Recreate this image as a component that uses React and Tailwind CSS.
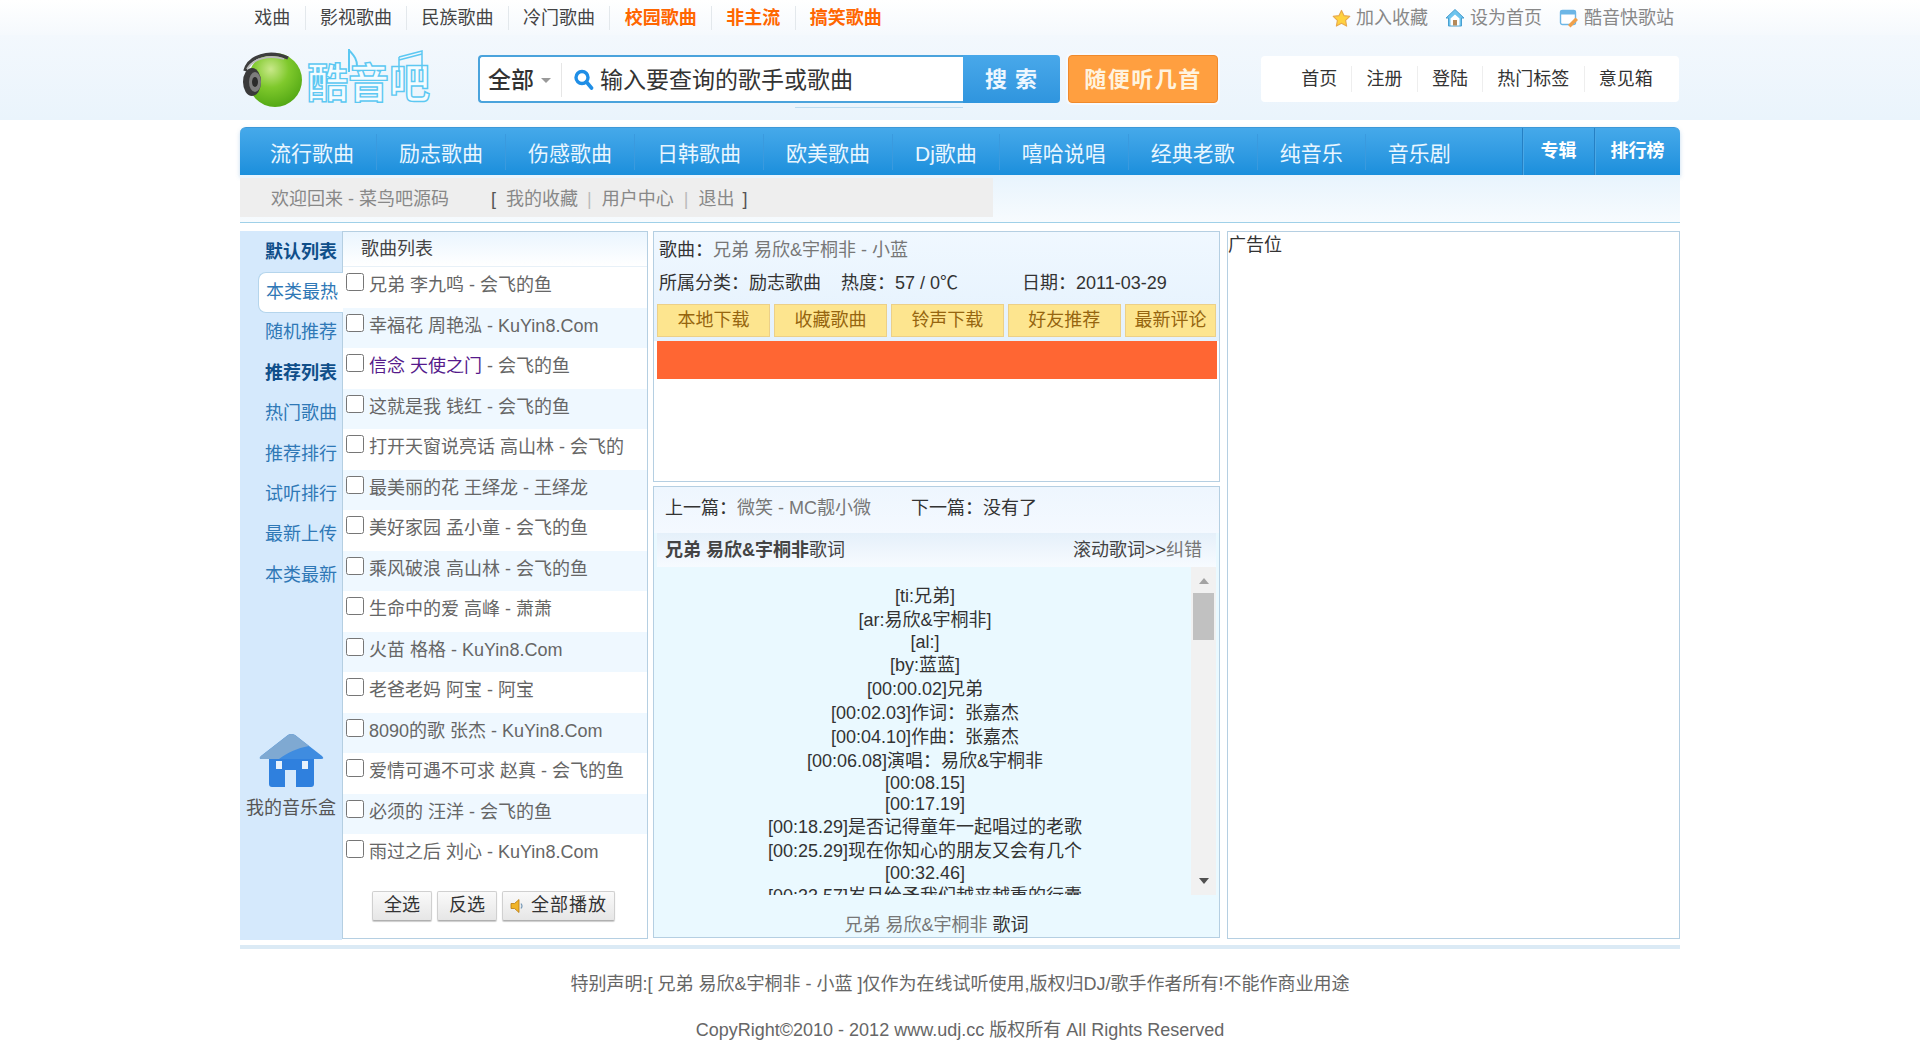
const font = "font-['Liberation_Sans','Noto_Sans_CJK_SC',sans-serif]";

const topLinks = [
  { text: "戏曲" },
  { text: "影视歌曲" },
  { text: "民族歌曲" },
  { text: "冷门歌曲" },
  { text: "校园歌曲", hot: true },
  { text: "非主流", hot: true },
  { text: "搞笑歌曲", hot: true },
];

const navItems = ["流行歌曲", "励志歌曲", "伤感歌曲", "日韩歌曲", "欧美歌曲", "Dj歌曲", "嘻哈说唱", "经典老歌", "纯音乐", "音乐剧"];

const headerLinks = ["首页", "注册", "登陆", "热门标签", "意见箱"];

const sideItems = [
  { text: "默认列表", bold: true },
  { text: "本类最热", active: true },
  { text: "随机推荐" },
  { text: "推荐列表", bold: true },
  { text: "热门歌曲" },
  { text: "推荐排行" },
  { text: "试听排行" },
  { text: "最新上传" },
  { text: "本类最新" },
];

const songs = [
  ["兄弟 李九鸣", "会飞的鱼"],
  ["幸福花 周艳泓", "KuYin8.Com"],
  ["信念 天使之门", "会飞的鱼", true],
  ["这就是我 钱红", "会飞的鱼"],
  ["打开天窗说亮话 高山林", "会飞的"],
  ["最美丽的花 王绎龙", "王绎龙"],
  ["美好家园 孟小童", "会飞的鱼"],
  ["乘风破浪 高山林", "会飞的鱼"],
  ["生命中的爱 高峰", "萧萧"],
  ["火苗 格格", "KuYin8.Com"],
  ["老爸老妈 阿宝", "阿宝"],
  ["8090的歌 张杰", "KuYin8.Com"],
  ["爱情可遇不可求 赵真", "会飞的鱼"],
  ["必须的 汪洋", "会飞的鱼"],
  ["雨过之后 刘心", "KuYin8.Com"],
];

const lyrics = [
  ["[ti:兄弟]", 1],
  ["[ar:易欣&宇桐非]", 1],
  ["[al:]", 0],
  ["[by:蓝蓝]", 1],
  ["[00:00.02]兄弟", 1],
  ["[00:02.03]作词：张嘉杰", 1],
  ["[00:04.10]作曲：张嘉杰", 1],
  ["[00:06.08]演唱：易欣&宇桐非", 1],
  ["[00:08.15]", 0],
  ["[00:17.19]", 0],
  ["[00:18.29]是否记得童年一起唱过的老歌", 1],
  ["[00:25.29]现在你知心的朋友又会有几个", 1],
  ["[00:32.46]", 0],
  ["[00:33.57]岁月给予我们越来越重的行囊", 1],
];

const actions = [
  ["本地下载", "w-[114px]"],
  ["收藏歌曲", "w-[114px]"],
  ["铃声下载", "w-[114px]"],
  ["好友推荐", "w-[114px]"],
  ["最新评论", "w-[92px]"],
];

const LogoBall = () => (
  <svg width="62" height="58" viewBox="0 0 62 58">
    <defs>
      <radialGradient id="ball" cx="0.42" cy="0.3" r="0.75">
        <stop offset="0" stopColor="#c9e88a" />
        <stop offset="0.45" stopColor="#7fc92c" />
        <stop offset="1" stopColor="#4fa512" />
      </radialGradient>
    </defs>
    <circle cx="33" cy="29" r="27" fill="url(#ball)" />
    <path d="M3 20 C7 5 27 -1 46 7" fill="none" stroke="#3d3d3d" strokeWidth="3.5" />
    <path d="M5 18 C11 8 27 3 42 8" fill="none" stroke="#b9b9b9" strokeWidth="1.8" />
    <ellipse cx="10" cy="31" rx="9" ry="14" fill="#3a3a3a" />
    <ellipse cx="13" cy="31" rx="6" ry="10" fill="#7d7d7d" />
    <ellipse cx="13" cy="31" rx="3" ry="5" fill="#2b2b2b" />
  </svg>
);

const Logo = () => (
  <div className="relative flex h-[62px] w-[190px] items-end">
    <span className="mb-[1px] ml-[2px]">
      <LogoBall />
    </span>
    <span className="mb-[5px] ml-[3px] text-[41px] leading-none font-bold whitespace-nowrap text-[#f4fcff] [-webkit-text-stroke:1.4px_#5cc8f2]">
      酷音吧
    </span>
    <svg className="absolute top-0 left-[100px]" width="90" height="30" viewBox="0 0 90 30" fill="none">
      <path d="M9 1 V24 M9 2 C13 7 17 10 17 18" stroke="#5cc8f2" strokeWidth="2" />
      <path d="M59 9 L82 3 V22 M59 9 V24 M59 12 L82 6" stroke="#5cc8f2" strokeWidth="1.5" />
    </svg>
  </div>
);

const StarIcon = () => (
  <svg width="19" height="19" viewBox="0 0 20 20">
    <path d="M10 1.5 12.7 7l6 .8-4.4 4.2 1.1 6L10 15.1 4.6 18l1.1-6L1.3 7.8l6-.8z" fill="#ffd23f" stroke="#e8a94c" strokeWidth="1.2" strokeLinejoin="round" />
  </svg>
);

const HomeIcon = () => (
  <svg width="20" height="20" viewBox="0 0 20 20">
    <path d="M10 1.5 19 10h-2.5v8h-13v-8H1z" fill="#6cc4ee" stroke="#4a9fd0" strokeWidth="1" strokeLinejoin="round" />
    <path d="M5.5 10.5 10 6.5l4.5 4v7h-9z" fill="#fff" />
    <rect x="8" y="12" width="4" height="5.5" fill="#b58a5a" />
  </svg>
);

const NoteIcon = () => (
  <svg width="20" height="20" viewBox="0 0 20 20">
    <rect x="1.5" y="2.5" width="15" height="14" rx="2" fill="#fff" stroke="#6cb6e6" strokeWidth="1.4" />
    <rect x="1.5" y="2.5" width="15" height="4" fill="#6cb6e6" />
    <path d="M9 17 16.5 9.5l2.5 2.5-7.5 7.5z" fill="#f0a04a" />
  </svg>
);

// blue house above 我的音乐盒: pale roof highlight, two windows, door notch
const HouseIcon = () => (
  <svg width="65" height="53" viewBox="0 0 65 53">
    <path d="M10 22 H55 V50 Q55 53 52 53 H37 V36 H26 V53 H13 Q10 53 10 50z" fill="#2f80de" />
    <path d="M29 1 Q32 -1 36 1 L63 22 Q66 25 62 25 H3 Q-1 25 2 22z" fill="#3f8ce0" />
    <path d="M29 1 Q32 -1 36 1 L50 12 C38 14 28 19 20 25 H3 Q-1 25 2 22z" fill="#7fa9d2" />
    <rect x="17" y="27" width="6" height="8" fill="#e8f2fc" />
    <rect x="43" y="27" width="6" height="8" fill="#e8f2fc" />
  </svg>
);

const SpeakerIcon = () => (
  <svg width="16" height="16" viewBox="0 0 16 16">
    <path d="M1 5.5h3.5L9 1.5v13l-4.5-4H1z" fill="#f0b429" stroke="#b87a10" strokeWidth="0.8" />
    <path d="M11 5.5q2 2.5 0 5" fill="none" stroke="#7a9bb8" strokeWidth="1.2" />
  </svg>
);

const GrayButton = ({ children, className }) => (
  <button
    type="button"
    className={`flex h-[30px] items-center justify-center rounded-[2px] border border-[#d0d0d0] border-b-[#b0b0b0] bg-gradient-to-b from-[#fafafa] to-[#e6e6e6] text-[18px] text-[#333] shadow-[0_1px_1px_rgba(0,0,0,0.2)] ${className}`}
  >
    {children}
  </button>
);

const Panel = ({ children, className = "" }) => (
  <div className={`border border-[#b5cfe2] ${className}`}>{children}</div>
);

const App = () => {
  return (
    <div className={`${font} min-h-[1063px] overflow-hidden bg-white text-[18px] text-[#333]`}>
      {/* top strip */}
      <div className="bg-gradient-to-b from-white to-[#f5f9fd]">
        <div className="mx-auto flex h-[35px] w-[1440px] items-center justify-between pt-[1px]">
          <div className="flex items-center">
            {topLinks.map((l, i) => (
              <a
                key={l.text}
                className={`h-[24px] px-[14.3px] leading-[24px] ${i < topLinks.length - 1 ? "border-r border-[#e3e8ec]" : ""} ${l.hot ? "font-bold text-[#ff6600]" : "text-[#444]"}`}
              >
                {l.text}
              </a>
            ))}
          </div>
          <div className="flex items-center pr-[6px] text-[#888]">
            <StarIcon />
            <span className="ml-[5px]">加入收藏</span>
            <span className="ml-[17px]"><HomeIcon /></span>
            <span className="ml-[5px]">设为首页</span>
            <span className="ml-[17px]"><NoteIcon /></span>
            <span className="ml-[5px]">酷音快歌站</span>
          </div>
        </div>
      </div>

      {/* logo + search */}
      <div className="bg-gradient-to-b from-[#f3f8fd] to-[#eaf4fc]">
        <div className="mx-auto flex h-[85px] w-[1440px] items-start">
          <div className="mt-[13px]">
            <Logo />
          </div>
          <div className="relative mt-[20px] ml-[48px] flex h-[48px] w-[582px]">
            <div className="flex w-[485px] items-center rounded-l-[4px] border-2 border-r-0 border-[#4aa3dc] bg-white pt-[2px]">
              <span className="ml-[8px] text-[23px] leading-none font-medium text-[#333]">全部</span>
              <span className="ml-[7px] h-0 w-0 border-x-[5px] border-t-[5px] border-x-transparent border-t-[#999]" />
              <span className="ml-[10px] h-[34px] w-px bg-[#e6e6e6]" />
              <svg className="ml-[11px]" width="21" height="22" viewBox="0 0 20 22" fill="none">
                <circle cx="8.5" cy="8.5" r="6" stroke="#1f8ee6" strokeWidth="3.4" />
                <path d="M13 13 18 19" stroke="#1f8ee6" strokeWidth="3.6" strokeLinecap="round" />
              </svg>
              <span className="ml-[6px] text-[23px] leading-none text-[#333]">输入要查询的歌手或歌曲</span>
            </div>
            <div className="flex w-[97px] items-center justify-center rounded-r-[4px] bg-gradient-to-b from-[#48a8ea] to-[#2f95de] text-[22px] font-bold tracking-[1px] text-[#eef7ff]">
              搜 索
            </div>
            <div className="absolute top-[52px] left-[317px] h-px w-[168px] bg-[#bcdcf0]" />
          </div>
          <div className="mt-[20px] ml-[8px] flex h-[48px] w-[150px] items-center justify-center rounded-[4px] border border-[#f08a2c] bg-[#ff9f40] text-[22px] font-bold tracking-[1.5px] text-[#fff3df] shadow-[0_0_0_2px_#f6fafe]">
            随便听几首
          </div>
          <div className="mt-[21px] ml-[43px] flex h-[46px] w-[418px] items-center rounded-[4px] bg-white pl-[26px]">
            {headerLinks.map((l, i) => (
              <a
                key={l}
                className={`h-[26px] px-[14.2px] leading-[26px] text-[#333] ${i < headerLinks.length - 1 ? "border-r border-[#eee]" : ""}`}
              >
                {l}
              </a>
            ))}
          </div>
        </div>
      </div>

      <div className="mx-auto w-[1440px]">
        {/* main nav */}
        <div className="mt-[7px] flex h-[48px] items-center rounded-t-[6px] border-t border-[#3d98d8] bg-gradient-to-b from-[#45a9ea] to-[#1a8fdc] pl-[8px] text-[21px] text-[#e9f6ff] shadow-[0_2px_4px_rgba(80,150,210,0.35)]">
          {navItems.map((n, i) => (
            <a key={n} className={`mt-[1px] h-[36px] px-[22px] leading-[39px] ${i < navItems.length - 1 ? "border-r border-[#3a9ade]" : ""}`}>
              {n}
            </a>
          ))}
          <div className="ml-auto flex h-full text-[18px] font-bold text-white">
            <a className="flex w-[72px] items-center justify-center border-l border-[#2580c4] shadow-[inset_1px_0_0_#4aa8e6]">专辑</a>
            <a className="flex w-[86px] items-center justify-center border-l border-[#2580c4] shadow-[inset_1px_0_0_#4aa8e6]">排行榜</a>
          </div>
        </div>

        {/* welcome bar */}
        <div className="h-[48px] border-b border-[#9fd0e8] bg-gradient-to-b from-[#e8f4fd] to-[#f7fbfe] pt-[3px]">
          <div className="flex h-[39px] w-[753px] items-center bg-[#eeeeee] pt-[3px] pl-[31px] text-[#888]">
            <span>欢迎回来 - 菜鸟吧源码</span>
            <span className="ml-[42px] text-[#555]">[</span>
            <span className="ml-[10px]">我的收藏</span>
            <span className="ml-[9px] text-[#bbb]">|</span>
            <span className="ml-[10px]">用户中心</span>
            <span className="ml-[10px] text-[#bbb]">|</span>
            <span className="ml-[10px]">退出</span>
            <span className="ml-[8px] text-[#555]">]</span>
          </div>
        </div>

        {/* main columns */}
        <div className="mt-[8px] flex h-[709px]">
          <div className="relative z-10 flex w-[102px] flex-col bg-[#d5e9fc] pt-[1px]">
            {sideItems.map((s) => (
              <div
                key={s.text}
                className={`flex h-[40.4px] items-center justify-end pr-[5px] ${s.active ? "ml-[18px] -mr-px rounded-l-[8px] border border-r-0 border-[#b5d5ec] bg-white text-[#2f78b6]" : s.bold ? "font-bold text-[#0f4f8a]" : "text-[#2f78b6]"}`}
              >
                {s.text}
              </div>
            ))}
            <div className="mt-auto mb-[118px] flex flex-col items-center text-[#555]">
              <HouseIcon />
              <span className="mt-[8px] whitespace-nowrap">我的音乐盒</span>
            </div>
          </div>

          <Panel className="flex h-[708px] w-[306px] flex-col bg-white">
            <div className="flex h-[35px] items-center border-b border-[#e8f1f8] bg-gradient-to-b from-[#eaf5fe] to-white pl-[18px] text-[#444]">
              歌曲列表
            </div>
            {songs.map(([name, artist, visited], i) => (
              <div key={name} className={`flex h-[40.5px] whitespace-nowrap pl-[3px] ${i % 2 ? "bg-[#eff8ff]" : "bg-white"}`}>
                <input type="checkbox" className="mt-[6px] h-[18px] w-[18px]" readOnly />
                <span className="ml-[5px] leading-[37px] text-[#666]">
                  <span className={visited ? "text-[#551a8b]" : ""}>{name}</span> - {artist}
                </span>
              </div>
            ))}
            <div className="mt-[16px] flex pl-[29px]">
              <GrayButton className="w-[60px]">全选</GrayButton>
              <GrayButton className="ml-[5px] w-[60px]">反选</GrayButton>
              <GrayButton className="ml-[5px] w-[113px] gap-[5px] tracking-[1px]">
                <SpeakerIcon />
                全部播放
              </GrayButton>
            </div>
          </Panel>

          <div className="ml-[5px] flex h-[708px] w-[567px] flex-col">
            <Panel className="h-[251px] bg-white">
              <div className="bg-gradient-to-b from-[#f0f8ff] to-[#e4f1fd] px-[3px] pb-[4px]">
                <div className="flex h-[35px] items-center pt-[2px] pl-[2px]">
                  歌曲：<span className="text-[#777]">兄弟 易欣&amp;宇桐非 - 小蓝</span>
                </div>
                <div className="flex h-[33px] items-center pl-[2px] whitespace-nowrap">
                  <span>所属分类：励志歌曲</span>
                  <span className="ml-[20px]">热度：57 / 0℃</span>
                  <span className="ml-[64px]">日期：2011-03-29</span>
                </div>
                <div className="mt-[4px] flex gap-[4px]">
                  {actions.map(([text, w]) => (
                    <div key={text} className={`flex h-[33px] ${w} items-center justify-center border border-[#ecd088] bg-[#fde58f] text-[#96650f]`}>
                      {text}
                    </div>
                  ))}
                </div>
              </div>
              <div className="mx-[3px] h-[38px] w-[560px] bg-[#ff6633]" />
            </Panel>

            <Panel className="mt-[4px] flex h-[452px] flex-col bg-[#eaf9ff] px-[3px]">
              <div className="-mx-[3px] flex h-[46px] items-center bg-gradient-to-b from-[#eef6fe] to-[#f4f9ff] pb-[4px] pl-[11px]">
                上一篇：<span className="text-[#777]">微笑 - MC靓小微</span>
                <span className="ml-[40px]">下一篇：没有了</span>
              </div>
              <div className="flex h-[34px] items-center justify-between bg-gradient-to-b from-[#e5f0fa] to-[#f7fbff] pr-[14px] pl-[8px] text-[#444]">
                <span><b>兄弟 易欣&amp;宇桐非</b>歌词</span>
                <span>滚动歌词&gt;&gt;<span className="text-[#777]">纠错</span></span>
              </div>
              <div className="flex h-[328px] overflow-hidden">
                <div className="flex-1 pt-[17px] pl-[2px] text-center whitespace-nowrap">
                  {lyrics.map(([line, cjk]) => (
                    <div key={line} className={cjk ? "h-[24px] leading-[24px]" : "h-[21px] leading-[21px]"}>
                      {line}
                    </div>
                  ))}
                </div>
                <div className="flex w-[25px] flex-col items-center bg-[#f1f1f1]">
                  <span className="mt-[11px] h-0 w-0 border-x-[5px] border-b-[6px] border-x-transparent border-b-[#a3a3a3]" />
                  <span className="mt-[9px] h-[47px] w-[21px] bg-[#c1c1c1]" />
                  <span className="mt-auto mb-[11px] h-0 w-0 border-x-[5px] border-t-[6px] border-x-transparent border-t-[#505050]" />
                </div>
              </div>
              <div className="mt-[18px] text-center leading-[24px] text-[#777]">
                兄弟 易欣&amp;宇桐非 <span className="text-[#333]">歌词</span>
              </div>
            </Panel>
          </div>

          <Panel className="ml-[7px] h-[708px] w-[453px] bg-white pt-[1px] leading-[24px]">
            广告位
          </Panel>
        </div>

        {/* footer */}
        <div className="mt-[5px] h-[4px] bg-[#dbeaf5]" />
        <div className="mt-[23px] text-center leading-[24px] text-[#666]">
          特别声明:[ 兄弟 易欣&amp;宇桐非 - 小蓝 ]仅作为在线试听使用,版权归DJ/歌手作者所有!不能作商业用途
        </div>
        <div className="mt-[22px] text-center leading-[24px] text-[#666]">
          CopyRight©2010 - 2012 www.udj.cc 版权所有 All Rights Reserved
        </div>
      </div>
    </div>
  );
};

export default App;
